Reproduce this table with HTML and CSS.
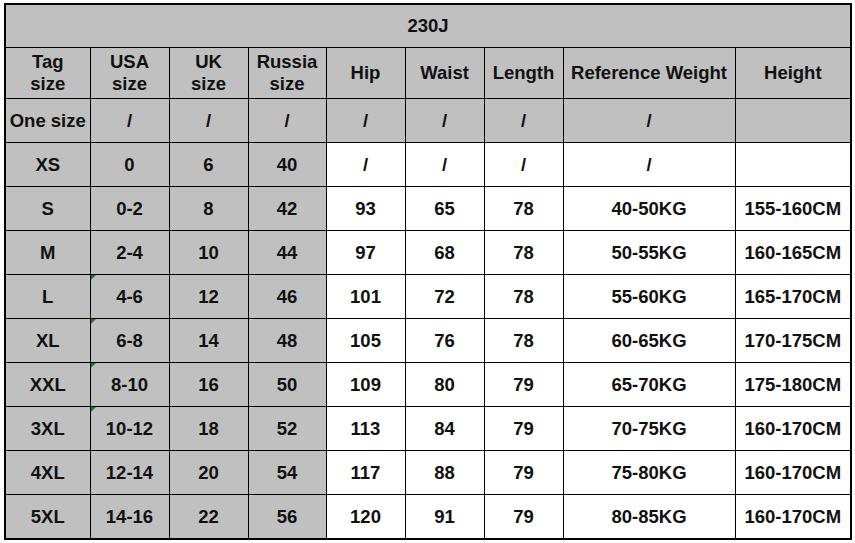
FILE: index.html
```html
<!DOCTYPE html>
<html>
<head>
<meta charset="utf-8">
<link rel="stylesheet" href="styles.css">
</head>
<body>
<table class="chart">
  <colgroup>
    <col class="c-tag"><col class="c-usa"><col class="c-uk"><col class="c-ru"><col class="c-hip"><col class="c-waist"><col class="c-len"><col class="c-ref"><col class="c-height">
  </colgroup>
  <tr class="title"><td colspan="9">230J</td></tr>
  <tr class="head">
    <td>Tag<br>size</td><td>USA<br>size</td><td>UK<br>size</td><td>Russia<br>size</td><td>Hip</td><td>Waist</td><td>Length</td><td>Reference Weight</td><td>Height</td>
  </tr>
  <tr class="grey-row"><td>One size</td><td>/</td><td>/</td><td>/</td><td>/</td><td>/</td><td>/</td><td>/</td><td></td></tr>
  <tr><td class="g">XS</td><td class="g">0</td><td class="g">6</td><td class="g">40</td><td>/</td><td>/</td><td>/</td><td>/</td><td></td></tr>
  <tr><td class="g">S</td><td class="g">0-2</td><td class="g">8</td><td class="g">42</td><td>93</td><td>65</td><td>78</td><td>40-50KG</td><td>155-160CM</td></tr>
  <tr><td class="g">M</td><td class="g">2-4</td><td class="g">10</td><td class="g">44</td><td>97</td><td>68</td><td>78</td><td>50-55KG</td><td>160-165CM</td></tr>
  <tr><td class="g">L</td><td class="g mark">4-6</td><td class="g">12</td><td class="g">46</td><td>101</td><td>72</td><td>78</td><td>55-60KG</td><td>165-170CM</td></tr>
  <tr><td class="g">XL</td><td class="g mark">6-8</td><td class="g">14</td><td class="g">48</td><td>105</td><td>76</td><td>78</td><td>60-65KG</td><td>170-175CM</td></tr>
  <tr><td class="g">XXL</td><td class="g mark">8-10</td><td class="g">16</td><td class="g">50</td><td>109</td><td>80</td><td>79</td><td>65-70KG</td><td>175-180CM</td></tr>
  <tr><td class="g">3XL</td><td class="g mark">10-12</td><td class="g">18</td><td class="g">52</td><td>113</td><td>84</td><td>79</td><td>70-75KG</td><td>160-170CM</td></tr>
  <tr><td class="g">4XL</td><td class="g">12-14</td><td class="g">20</td><td class="g">54</td><td>117</td><td>88</td><td>79</td><td>75-80KG</td><td>160-170CM</td></tr>
  <tr><td class="g">5XL</td><td class="g">14-16</td><td class="g">22</td><td class="g">56</td><td>120</td><td>91</td><td>79</td><td>80-85KG</td><td>160-170CM</td></tr>
</table>
</body>
</html>
```
FILE: styles.css
```css
html, body {
  margin: 0;
  padding: 0;
  background: #fff;
}
body {
  padding: 3px 0 0 4px;
}
.chart {
  border-collapse: collapse;
  table-layout: fixed;
  width: 846px;
  font-family: "Liberation Sans", Arial, sans-serif;
  font-weight: bold;
  font-size: 18.5px;
  color: #111;
  border: 2px solid #000;
}
.c-tag { width: 85px; }
.c-usa { width: 79px; }
.c-uk { width: 79px; }
.c-ru { width: 78px; }
.c-hip { width: 79px; }
.c-waist { width: 79px; }
.c-len { width: 79px; }
.c-ref { width: 172px; }
.c-height { width: 116px; }
.chart td {
  border: 1px solid #000;
  text-align: center;
  vertical-align: middle;
  padding: 0;
  height: 43px;
  line-height: 22px;
  position: relative;
  background: #fff;
}
.chart .title td {
  height: 42px;
  background: #c0c0c0;
}
.chart .head td {
  height: 50px;
  background: #c0c0c0;
}
.chart .grey-row td {
  background: #c0c0c0;
}
.chart td.g {
  background: #c0c0c0;
}
.chart td.mark::before {
  content: "";
  position: absolute;
  left: 0;
  top: 0;
  width: 0;
  height: 0;
  border-top: 5px solid #1e7b1e;
  border-right: 5px solid transparent;
}
```
